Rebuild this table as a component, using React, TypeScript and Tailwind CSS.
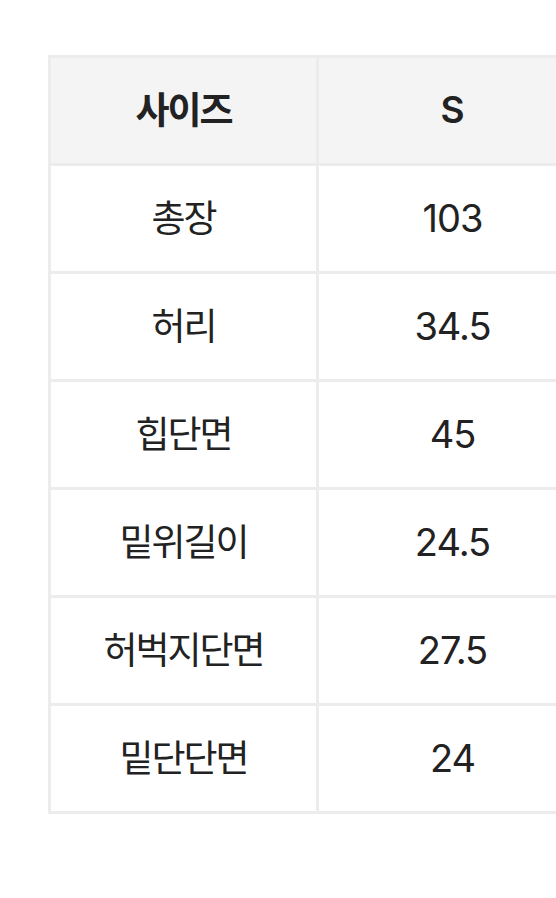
import React from "react";

const rows: [string, string][] = [
  ["총장", "103"],
  ["허리", "34.5"],
  ["힙단면", "45"],
  ["밑위길이", "24.5"],
  ["허벅지단면", "27.5"],
  ["밑단단면", "24"],
];

const ko = { fontFamily: '"Noto Sans CJK KR", "Noto Sans", sans-serif' };
const num = { fontFamily: 'Inter, "Noto Sans CJK KR", sans-serif' };

export default function App() {
  return (
    <div className="w-[556px] h-[898px] overflow-hidden bg-white pl-[48px] pt-[55px] text-[#222222]">
      <div className="flex flex-col w-[540px] border-l-[3px] border-t-[3px] border-[#ececec]">
        <div className="flex bg-[#f4f4f4]">
          <div className="flex shrink-0 w-[268px] h-[108px] items-center justify-center border-r-[3px] border-b-[3px] border-[#ececec]">
            <span style={ko} className="text-[37px] font-bold tracking-[-2px] leading-none pb-[5px]">사이즈</span>
          </div>
          <div className="flex shrink-0 w-[270px] h-[108px] items-center justify-center border-r-[3px] border-b-[3px] border-[#ececec]">
            <span style={num} className="text-[37px] font-semibold leading-none pb-[2px]">S</span>
          </div>
        </div>
        {rows.map(([k, v]) => (
          <div key={k} className="flex bg-white">
            <div className="flex shrink-0 w-[268px] h-[108px] items-center justify-center border-r-[3px] border-b-[3px] border-[#ececec]">
              <span style={ko} className="text-[37px] font-normal tracking-[-2px] leading-none pb-[5px]">{k}</span>
            </div>
            <div className="flex shrink-0 w-[270px] h-[108px] items-center justify-center border-r-[3px] border-b-[3px] border-[#ececec]">
              <span style={num} className="text-[38px] font-normal tracking-[-1px] leading-none pb-[2px]">{v}</span>
            </div>
          </div>
        ))}
      </div>
    </div>
  );
}
